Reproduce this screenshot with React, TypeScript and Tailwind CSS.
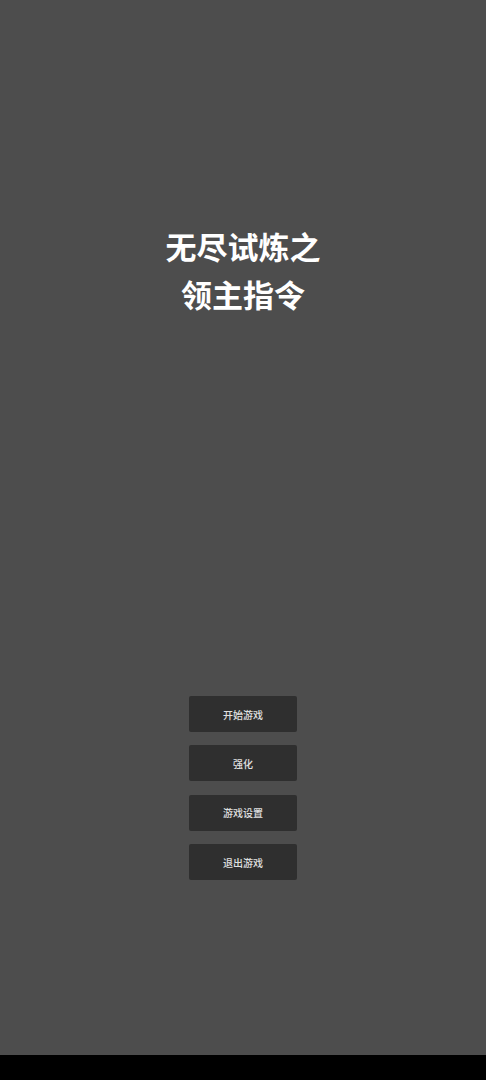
export default function App() {
  const items = ["开始游戏", "强化", "游戏设置", "退出游戏"];
  return (
    <div
      className="flex h-[1080px] w-full flex-col bg-black"
      style={{ fontFamily: '"Noto Sans CJK SC", "Noto Sans", sans-serif' }}
    >
      <div className="flex h-[1055px] flex-col items-center bg-[#4d4d4d]">
        <h1 className="mt-[222px] text-center text-[31px] font-bold leading-[48px] text-white">
          无尽试炼之
          <br />
          领主指令
        </h1>
        <div className="mt-[378px] flex flex-col gap-[13.4px]">
          {items.map((t) => (
            <button
              key={t}
              className="flex h-[36px] w-[108px] items-center justify-center rounded-[2px] bg-[#2f2f2f] text-[10px] font-medium text-[#e0e0e0]"
            >
              {t}
            </button>
          ))}
        </div>
      </div>
    </div>
  );
}
